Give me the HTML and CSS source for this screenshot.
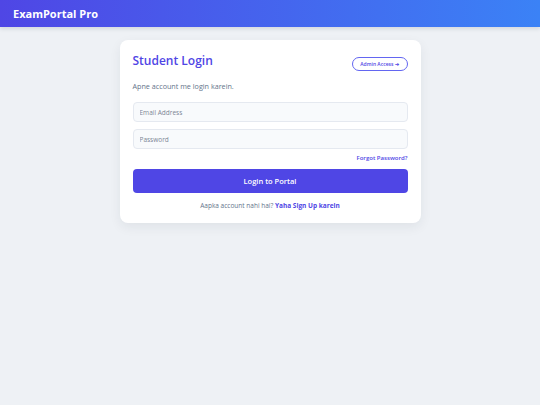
FILE: index.html
```html
<!DOCTYPE html>
<html lang="en">
<head>
<meta charset="utf-8">
<title>ExamPortal Pro</title>
<link rel="stylesheet" href="styles.css">
</head>
<body>
<header class="topbar">
  <div class="brand">ExamPortal Pro</div>
</header>
<main class="page">
  <section class="card">
    <div class="card-head">
      <h1 class="title">Student Login</h1>
      <button class="admin-btn">Admin Access ➔</button>
    </div>
    <p class="subtitle">Apne account me login karein.</p>
    <form class="form">
      <input class="field" type="email" placeholder="Email Address">
      <input class="field" type="password" placeholder="Password">
      <div class="forgot-row"><a class="forgot" href="#">Forgot Password?</a></div>
      <button class="submit" type="button">Login to Portal</button>
    </form>
    <p class="signup">Aapka account nahi hai? <a class="signup-link" href="#">Yaha Sign Up karein</a></p>
  </section>
</main>
</body>
</html>
```

FILE: styles.css
```css
* { box-sizing: border-box; }
html, body { margin: 0; padding: 0; }
body {
  background: #eef1f5;
  font-family: "Open Sans", "Liberation Sans", sans-serif;
  color: #334155;
  min-height: 405px;
}
.topbar {
  height: 27px;
  background: linear-gradient(90deg, #4f46e5 0%, #3b82f6 100%);
  box-shadow: 0 2px 4px rgba(30, 41, 59, 0.12);
  display: flex;
  align-items: center;
  padding: 0 13px;
}
.brand {
  color: #ffffff;
  font-weight: 700;
  font-size: 11px;
  line-height: 14px;
}
.page {
  display: flex;
  justify-content: center;
  padding-top: 13px;
}
.card {
  width: 301px;
  background: #ffffff;
  border-radius: 8px;
  box-shadow: 0 4px 12px rgba(30, 41, 59, 0.07);
  padding: 12px 13px 13px;
}
.card-head {
  display: flex;
  justify-content: space-between;
  align-items: flex-start;
}
.title {
  margin: 0;
  font-size: 12px;
  line-height: 18px;
  font-weight: 600;
  color: #4f46e5;
}
.admin-btn {
  font-family: inherit;
  font-size: 5px;
  font-weight: 600;
  color: #4f46e5;
  background: #ffffff;
  border: 1px solid #6366f1;
  border-radius: 999px;
  height: 14px;
  width: 56px;
  padding: 0;
  margin-top: 5px;
}
.subtitle {
  margin: 10px 0 0;
  font-size: 7.2px;
  line-height: 10px;
  color: #64748b;
}
.form {
  margin-top: 11px;
  display: flex;
  flex-direction: column;
}
.field {
  height: 20px;
  border: 1px solid #e5e9f0;
  background: #f8fafc;
  border-radius: 4px;
  padding: 0 6px;
  font-family: inherit;
  font-size: 6.5px;
  color: #334155;
  margin: 0;
}
.field + .field { margin-top: 7px; }
.field::placeholder { color: #7c8594; }
.forgot-row {
  display: flex;
  justify-content: flex-end;
  margin-top: 5px;
  line-height: 8px;
}
.forgot {
  font-size: 6px;
  font-weight: 600;
  color: #4f46e5;
  text-decoration: none;
}
.submit {
  margin-top: 7px;
  height: 24px;
  border: none;
  border-radius: 4px;
  background: #4f46e5;
  color: #ffffff;
  font-family: inherit;
  font-size: 7.5px;
  font-weight: 600;
  padding: 0;
}
.signup {
  margin: 9px 0 0;
  text-align: center;
  font-size: 6.5px;
  line-height: 8px;
  color: #64748b;
}
.signup-link {
  color: #4f46e5;
  font-weight: 700;
  text-decoration: none;
}
```
